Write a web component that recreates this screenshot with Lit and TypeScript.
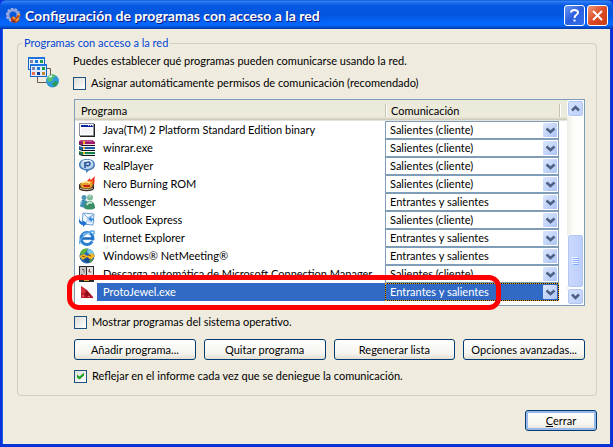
import { LitElement, html, svg, css, type TemplateResult } from "lit";
import { customElement, property } from "lit/decorators.js";

const OPTIONS = ["Salientes (cliente)", "Entrantes y salientes"];

const icons: Record<string, TemplateResult> = {
  java: svg`
    <rect x="1" y="2" width="15" height="13" fill="#222"/>
    <rect x="0" y="1" width="15" height="13" fill="#8b9199"/>
    <rect x="1" y="2" width="13" height="11" fill="#fff"/>
    <rect x="2" y="3" width="12" height="2" fill="#0a24a0"/>
    <path d="M9 3.500h1M11 3.500h1M13 3.500h1" stroke="#dfe6f5"/>
    <rect x="2" y="6" width="11" height="6" fill="#f4f4f8"/>`,
  winrar: svg`
    <path d="M0 1 3 0h10l3 2v3H3L0 4z" fill="#a01a6a"/>
    <path d="M3 1h10" stroke="#d983bd"/>
    <path d="M4 4.500h12" stroke="#f2dce9"/>
    <path d="M0 6l3 1h13v3H3L0 9z" fill="#1b5cab"/>
    <path d="M4 9.500h12" stroke="#dcebf8"/>
    <path d="M0 11l3 1h13v3H3L0 14z" fill="#16814b"/>
    <path d="M4 14.500h12" stroke="#cfeedd"/>
    <path d="M0 4l3 1.500h13M0 9l3 1.500h13M0 14l3 1.500h13" stroke="#1a1118" fill="none"/>
    <path d="M5 1v3M5 7v2M5 12v2" stroke="#e7b21a" stroke-width="2"/>`,
  real: svg`
    <path d="M8 1c5 0 8 2 8 6 0 3-3 5-6 5.500L7 15v-2.500C3 12 0 10 0 7c0-4 3-6 8-6z" fill="#4a7db8"/>
    <ellipse cx="8" cy="6.500" rx="6.500" ry="4.500" fill="#b9d6ef"/>
    <path d="M2 4c3-3 9-3 12 0-3-1-9-1-12 0z" fill="#eef7ff"/>
    <path d="M6 10V4M6 6c1-2 5-3 5 0 0 2-3 2-4 1" stroke="#264f96" stroke-width="1.500" fill="none"/>`,
  nero: svg`
    <path d="M7 7c0-3 3-2 3-5l2 2 4-4c-1 4 0 5-1 9z" fill="#ef2b14"/>
    <path d="M9 7l2-3 1 2 2-2-1 4z" fill="#ffb425"/>
    <path d="M0 9c1-4 13-4 15 0v4c-2 3-13 3-15 0z" fill="#3b2a1c"/>
    <path d="M1 8c2-3 11-3 13 0l-1 3c-3 2-9 2-11 0z" fill="#e2a02c"/>
    <path d="M3 7c3-2 6-1 8 0" stroke="#fff0a4" stroke-width="1.500" fill="none"/>
    <path d="M4 9h7v2H5z" fill="#c82315"/>
    <path d="M1 12c3 2 10 2 13 0" stroke="#d8d0a8" fill="none"/>`,
  messenger: svg`
    <circle cx="5" cy="3.500" r="2.500" fill="#4b95b5"/>
    <path d="M1 12c0-6 2-6 4-6s5 2 5 6c-2 2-7 2-9 0z" fill="#3f8bb0"/>
    <circle cx="11" cy="3.500" r="3" fill="#7dbb9b"/>
    <path d="M5 14c1-6 3-7 6-7s5 3 5 7c-2 2-9 2-11 0z" fill="#3b8d68"/>
    <path d="M8 11c1-3 3-3 5-2" stroke="#c5ecd2" stroke-width="2" fill="none"/>
    <path d="M10 2h2" stroke="#e0f5e8"/>
    <path d="M3 7c-1 1-2 3-1 4" stroke="#b9e1f1" fill="none"/>`,
  outlook: svg`
    <path d="M4 1l11 1-1 11-11-1z" fill="#eef6ff" stroke="#6c9cd4"/>
    <path d="M5 2l4 4 5-3" stroke="#7da6d9" fill="none"/>
    <path d="M8 6l5 1-1 4-5-1z" fill="#c2daf5"/>
    <path d="M1 3c-2 4 0 7 3 7l-1-2 5 3-4 4v-2C-1 13-1 6 1 3z" fill="#1d6fd0"/>
    <path d="M15 12c1-3 0-6-3-6l1-2-4 3 4 3v-2c2 0 3 2 2 4z" fill="#3a8ae2"/>`,
  ie: svg`
    <circle cx="8" cy="8.500" r="6" fill="none" stroke="#2b7fd0" stroke-width="3"/>
    <path d="M3 8.500h11" stroke="#1c68bb" stroke-width="2.500"/>
    <path d="M11 10.500h5v2z" fill="#fff"/>
    <path d="M4 5c2-2 5-2 7-1" stroke="#9bd2f7" stroke-width="1.500" fill="none"/>
    <path d="M1 14C-1 10 8 1 14 1c2 0 1 3 0 4" stroke="#5ba8e6" stroke-width="1.500" fill="none"/>`,
  netmeeting: svg`
    <circle cx="8" cy="8" r="7.500" fill="#2766b5"/>
    <path d="M2 3c2-3 6-3 7-2L7 4 4 7 1 6z" fill="#5fb340"/>
    <path d="M9 1c4 0 6 3 6 5l-4 1-3-3z" fill="#78c8e8"/>
    <path d="M0 8l5-2 3 2 5-3 3 3-4 4-4-2-4 2z" fill="#eeb525"/>
    <path d="M4 12l4-3 4 3-3 3z" fill="#174a8c"/>
    <path d="M3 8l3 1M9 7l3 1" stroke="#8c4e10"/>
    <path d="M10 13l3-2 1 1-3 3z" fill="#4f9c32"/>`,
  descarga: svg`
    <rect x="0" y="0" width="15" height="16" fill="#29282a"/>
    <rect x="1" y="1" width="6" height="12" fill="#c9c5c5"/>
    <rect x="8" y="1" width="6" height="12" fill="#e4e1e1"/>
    <path d="M3 3.500h2v3M10.500 3v3h2M10 9.500h2M2 8.500h2" stroke="#6a6468" fill="none"/>
    <path d="M9 5h2M4 11h2" stroke="#b44a4a"/>
    <path d="M5 14h5" stroke="#e0a62d" stroke-width="2"/>`,
  jewel: svg`
    <path d="M2 2l6 4 6 7v1H2z" fill="#b01526"/>
    <path d="M2 2l5 4-2 4-3-2z" fill="#d6323e"/>
    <path d="M6 11l2-4 4 6z" fill="#860c1a"/>
    <path d="M2 9l3 1 1 4H2z" fill="#c4202f"/>
    <path d="M3 12h2M9 12l2 1" stroke="#ee8089"/>`,
};

interface Program { icon: string; name: string; mode: number; selected?: boolean }

const PROGRAMS: Program[] = [
  { icon: "java", name: "Java(TM) 2 Platform Standard Edition binary", mode: 0 },
  { icon: "winrar", name: "winrar.exe", mode: 0 },
  { icon: "real", name: "RealPlayer", mode: 0 },
  { icon: "nero", name: "Nero Burning ROM", mode: 0 },
  { icon: "messenger", name: "Messenger", mode: 1 },
  { icon: "outlook", name: "Outlook Express", mode: 0 },
  { icon: "ie", name: "Internet Explorer", mode: 1 },
  { icon: "netmeeting", name: "Windows® NetMeeting®", mode: 1 },
  { icon: "descarga", name: "Descarga automática de Microsoft Connection Manager", mode: 0 },
  { icon: "jewel", name: "ProtoJewel.exe", mode: 1, selected: true },
];

@customElement("mode-select")
class ModeSelect extends LitElement {
  @property({ type: Number }) mode = 0;
  @property() label = "";
  @property({ type: Boolean, reflect: true }) active = false;

  static styles = css`
    :host { display: flex; position: relative; height: 18px; }
    select {
      appearance: none; flex: 1; min-width: 0; margin: 0; padding: 0 18px 0 4px;
      border: 1px solid #7f9db9; border-radius: 0; background: #fff; color: #000;
      font: inherit; outline: none;
    }
    :host([active]) select {
      background: linear-gradient(#316ac5, #316ac5) padding-box, #101010 border-box;
      color: #fff; border: 1px dotted #e8a020;
    }
    .arrow { position: absolute; right: 2px; top: 2px; width: 14px; height: 14px; pointer-events: none; }
  `;

  render() {
    return html`
      <select aria-label=${this.label}>
        ${OPTIONS.map((o, i) => html`<option ?selected=${i === this.mode}>${o}</option>`)}
      </select>
      <svg class="arrow" viewBox="0 0 14 14" aria-hidden="true">
        <defs><linearGradient id="g" x2="1" y2="1">
          <stop stop-color="#dce7fe"/><stop offset="1" stop-color="#aec4f5"/>
        </linearGradient></defs>
        <rect width="14" height="14" rx="1" fill="url(#g)"/>
        <path d="M3.500 5.500 7.500 9l4-3.500" fill="none" stroke="#4d6185" stroke-width="2.500"/>
      </svg>`;
  }
}

@customElement("program-list")
class ProgramList extends LitElement {
  static styles = css`
    :host { display: block; position: relative; }
    .box { display: flex; border: 1px solid #7f9db9; background: #fff; }
    .view { flex: 1; min-width: 0; padding-bottom: 4px; }
    table { width: 100%; border-collapse: collapse; table-layout: fixed; }
    .c-icon { width: 22px; }
    .c-mode { width: 174px; }
    .c-end { width: 8px; }
    th {
      height: 21px; padding: 0 0 0 6px; text-align: left; font-weight: normal;
      background: linear-gradient(#ebeadb 17px, #e2decd 18px, #d6d2c2 19px, #cbc7b8 20px, #fff 21px);
    }
    .sep {
      background:
        linear-gradient(#c5c2b2, #c5c2b2) 0 4px / 1px 13px no-repeat,
        linear-gradient(#fff, #fff) 1px 4px / 1px 13px no-repeat,
        linear-gradient(#ebeadb 17px, #e2decd 18px, #d6d2c2 19px, #cbc7b8 20px, #fff 21px);
    }
    td { height: 18px; padding: 0; }
    td svg { display: block; width: 16px; height: 16px; margin-left: 4px; }
    .name { padding-left: 6px; white-space: nowrap; overflow: hidden; }
    .on .name { background: #316ac5; color: #fff; }
    .bar {
      width: 17px; display: flex; flex-direction: column;
      background: linear-gradient(90deg, #eeede5, #fdfdfa 40%, #fefefb);
    }
    .step, .thumb {
      box-sizing: border-box; width: 17px; margin: 0; padding: 0; display: grid; place-items: center;
      border: 1px solid #fff; border-radius: 3px; box-shadow: inset 0 0 0 1px #b3c6ef;
      background: linear-gradient(135deg, #d6e2fe, #bccffb);
    }
    .step { height: 17px; }
    .step svg { width: 11px; height: 9px; }
    .track { flex: 1; display: flex; flex-direction: column; justify-content: flex-end; }
    .thumb { height: 54px; background: linear-gradient(90deg, #cbdafd, #bacdfb); }
    .thumb svg { width: 7px; height: 8px; }
    .ring {
      position: absolute; left: -7px; right: 84px; bottom: -4px; height: 35px;
      box-sizing: border-box; border: 5px solid #fe0000; border-radius: 12px; pointer-events: none;
    }
  `;

  render() {
    return html`
      <div class="box">
        <div class="view">
          <table>
            <colgroup><col class="c-icon"><col><col class="c-mode"><col class="c-end"></colgroup>
            <thead>
              <tr><th colspan="2">Programa</th><th class="sep">Comunicación</th><th class="sep" aria-hidden="true"></th></tr>
            </thead>
            <tbody>
              ${PROGRAMS.map(p => html`
                <tr class=${p.selected ? "on" : ""}>
                  <td><svg viewBox="0 0 16 16" aria-hidden="true">${icons[p.icon]}</svg></td>
                  <td class="name">${p.name}</td>
                  <td><mode-select .mode=${p.mode} .label=${p.name} ?active=${p.selected}></mode-select></td>
                  <td></td>
                </tr>`)}
            </tbody>
          </table>
        </div>
        <div class="bar">
          <button class="step" aria-label="Subir">
            <svg viewBox="0 0 11 9"><path d="M2 6.500 5.500 3 9 6.500" fill="none" stroke="#4d6185" stroke-width="2.500"/></svg>
          </button>
          <div class="track">
            <div class="thumb">
              <svg viewBox="0 0 7 8"><path d="M0 .5h6M0 2.500h6M0 4.500h6M0 6.500h6" stroke="#eef4fe"/><path d="M1 1.500h6M1 3.500h6M1 5.500h6M1 7.500h6" stroke="#8cb0f8"/></svg>
            </div>
          </div>
          <button class="step" aria-label="Bajar">
            <svg viewBox="0 0 11 9"><path d="M2 2.500 5.500 6 9 2.500" fill="none" stroke="#4d6185" stroke-width="2.500"/></svg>
          </button>
        </div>
      </div>
      <div class="ring"></div>`;
  }
}

@customElement("app-root")
class AppRoot extends LitElement {
  static styles = css`
    :host {
      display: flex; flex-direction: column; box-sizing: border-box; min-height: 100vh;
      font: 11px/14px Lato, "DejaVu Sans", sans-serif; color: #000; background: #0831d9;
    }
    header {
      display: flex; align-items: center; gap: 2px; height: 29px; box-sizing: border-box; padding: 2px 5px 0 6px;
      border-radius: 6px 6px 0 0;
      background: linear-gradient(#0a48c8 0, #2f86f8 1px, #1c6cee 3px, #0458e2 6px, #0355dd 15px, #0463f8 21px, #0468fe 25px, #0450d4 27px, #0237ac 29px);
    }
    .logo { width: 16px; height: 16px; }
    h1 {
      flex: 1; margin: 0; padding-left: 1px; font: bold 14px/18px Lato, "DejaVu Sans", sans-serif; color: #fff;
      text-shadow: 1px 1px 0 #0a1883; white-space: nowrap;
    }
    .cap {
      box-sizing: border-box; width: 21px; height: 21px; margin: 0; padding: 0; display: grid; place-items: center;
      border: 1px solid #fff; border-radius: 3px; background: linear-gradient(135deg, #6b97f5, #2a5ddd 50%, #3472f0);
    }
    .cap.close { background: linear-gradient(135deg, #f09878, #dc4a25 50%, #c83c14); }
    .cap svg { width: 15px; height: 15px; }
    main {
      flex: 1; margin: 0 3px 3px; padding: 7px 13px 13px 14px; background: #efebde;
      box-shadow: -1px 0 #1660e8, 1px 0 #0c3ad0, 0 1px #0c3ad0;
    }
    fieldset {
      margin: 0; min-width: 0; border: 1px solid #d0d0bf; border-radius: 4px;
      padding: 4px 11px 12px 9px; display: grid; grid-template-columns: 32px minmax(0, 1fr); column-gap: 15px;
    }
    legend { margin-left: -5px; padding: 0 2px; color: #0046d5; line-height: 14px; }
    .net { width: 32px; height: 32px; margin-top: 2px; }
    p { margin: 0 0 8px -1px; }
    label { display: flex; align-items: center; gap: 5px; }
    .auto { margin: 0 0 9px -1px; }
    .sys { margin: 9px 0 10px; }
    input {
      appearance: none; box-sizing: border-box; width: 13px; height: 13px; margin: 0; display: grid; place-items: center;
      border: 1px solid #1c5180; background: linear-gradient(135deg, #dcdcd7, #fff);
    }
    input:checked::before {
      content: ""; width: 7px; height: 7px; background: #21a121;
      clip-path: polygon(0 29%, 0 71%, 36% 100%, 100% 43%, 100% 0, 36% 57%);
    }
    .actions { display: grid; grid-template-columns: repeat(4, 1fr); gap: 8px; margin-bottom: 9px; }
    .btn {
      box-sizing: border-box; height: 21px; margin: 0; padding: 0; font: inherit; color: #000; white-space: nowrap;
      border: 1px solid #003c74; border-radius: 3px; background: linear-gradient(#fff, #f5f4ee 70%, #e3dfd3);
    }
    footer { display: flex; justify-content: flex-end; margin-top: 14px; }
    .main { width: 72px; box-shadow: inset 0 0 0 2px #98b8ea, inset 0 2px #cee7ff; }
  `;

  render() {
    return html`
      <header>
        <svg class="logo" viewBox="0 0 16 16" aria-hidden="true">
          <circle cx="7" cy="7" r="5" fill="none" stroke="#8fa2dc" stroke-width="3"/>
          <circle cx="7" cy="7" r="6.500" fill="none" stroke="#a5b4e8" stroke-width="1.500" stroke-dasharray="2 2"/>
          <path d="M5 10l2-2 2 2 4-4 2 1-3 3 2 2-4 3-5-1z" fill="#c64418"/>
          <path d="M7 9l2 2M10 13l3-3M12 6l2 1" stroke="#f3b63c" stroke-width="1.500"/>
          <path d="M6 13l3 1" stroke="#3a2640"/>
        </svg>
        <h1>Configuración de programas con acceso a la red</h1>
        <button class="cap" aria-label="Ayuda">
          <svg viewBox="0 0 15 15"><path d="M4 4.500C4 1 11 1 11 4.500 11 7 7.500 6.500 7.500 10" fill="none" stroke="#fff" stroke-width="2"/><path d="M6.500 11.500h2v2h-2z" fill="#fff"/></svg>
        </button>
        <button class="cap close" aria-label="Cerrar ventana">
          <svg viewBox="0 0 15 15"><path d="M3 3l9 9M12 3l-9 9" stroke="#fff" stroke-width="2"/></svg>
        </button>
      </header>
      <main>
        <fieldset>
          <legend>Programas con acceso a la red</legend>
          <svg class="net" viewBox="0 0 32 32" aria-hidden="true">
            <path d="M18 12.500h5.500V19M10.500 19v7.500H20" fill="none" stroke="#6d5a50"/>
            <rect x="1.500" y="1.500" width="16" height="12" fill="#e9f1fb" stroke="#1464cc"/>
            <path d="M1 2h17" stroke="#1e74dc" stroke-width="2"/>
            <path d="M3 5.500h3" stroke="#8080b0" stroke-width="3"/><path d="M8 5.500h3" stroke="#1a78dc" stroke-width="3"/><path d="M13 5.500h3" stroke="#1f9c4a" stroke-width="3"/>
            <rect x="3.500" y="8.500" width="16" height="12" fill="#dfeafb" stroke="#1464cc"/>
            <path d="M3 9h17" stroke="#1e74dc" stroke-width="2"/>
            <path d="M5 12.500h3" stroke="#8080b0" stroke-width="3"/><path d="M10 12.500h3" stroke="#1a78dc" stroke-width="3"/><path d="M15 12.500h3" stroke="#1f9c4a" stroke-width="3"/>
            <path d="M5 17.500h3" stroke="#f26a4c" stroke-width="3"/><path d="M10 17.500h3" stroke="#123a94" stroke-width="3"/><path d="M15 17.500h3" stroke="#c08a2c" stroke-width="3"/>
            <circle cx="25.500" cy="25" r="6.500" fill="#2f9ada"/>
            <path d="M21 21c2-3 6-3 8-1l-3 2-1 3-3 1-2-2z" fill="#59c06c"/>
            <path d="M25 28l3-3 3 1c0 2-2 4-4 5z" fill="#2f9a56"/>
            <path d="M22 21l3-1" stroke="#e5fbff" stroke-width="1.500"/>
          </svg>
          <div>
            <p>Puedes establecer qué programas pueden comunicarse usando la red.</p>
            <label class="auto"><input type="checkbox">Asignar automáticamente permisos de comunicación (recomendado)</label>
            <program-list></program-list>
            <label class="sys"><input type="checkbox">Mostrar programas del sistema operativo.</label>
            <div class="actions">
              <button class="btn">Añadir programa...</button>
              <button class="btn">Quitar programa</button>
              <button class="btn">Regenerar lista</button>
              <button class="btn">Opciones avanzadas...</button>
            </div>
            <label><input type="checkbox" checked>Reflejar en el informe cada vez que se deniegue la comunicación.</label>
          </div>
        </fieldset>
        <footer><button class="btn main"><u>C</u>errar</button></footer>
      </main>`;
  }
}
